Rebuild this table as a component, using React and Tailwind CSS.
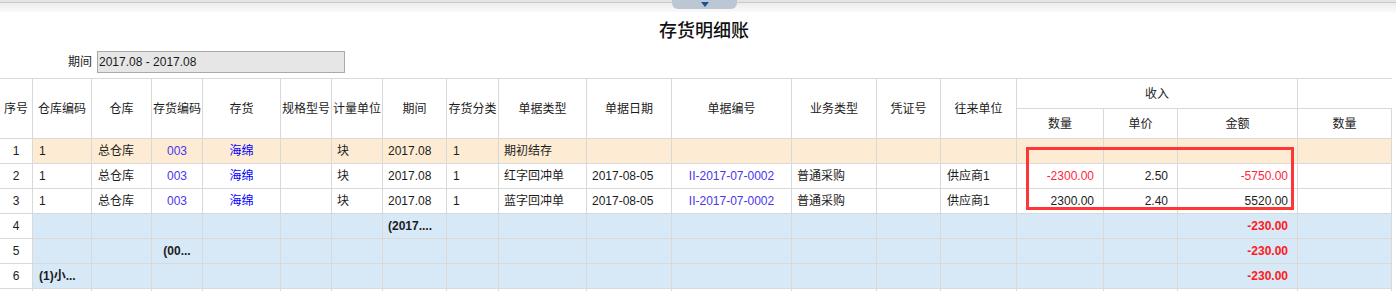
import React from 'react';

const cols =
  'grid grid-cols-[33px_59px_60px_51px_78px_51px_51px_64px_52px_88px_85px_120px_85px_64px_76px_87px_74px_120px_94px]';

const align = [
  'justify-center',
  'justify-start pl-[6px]',
  'justify-start pl-[6px]',
  'justify-center',
  'justify-center',
  'justify-start pl-[5px]',
  'justify-start pl-[5px]',
  'justify-start pl-[5px]',
  'justify-start pl-[6px]',
  'justify-start pl-[5px]',
  'justify-start pl-[5px]',
  'justify-center',
  'justify-start pl-[5px]',
  'justify-start pl-[5px]',
  'justify-start pl-[6px]',
  'justify-end pr-[9px]',
  'justify-end pr-[9px]',
  'justify-end pr-[9px]',
  'justify-end pr-[9px]',
];

const heads = [
  '序号', '仓库编码', '仓库', '存货编码', '存货', '规格型号', '计量单位', '期间', '存货分类',
  '单据类型', '单据日期', '单据编号', '业务类型', '凭证号', '往来单位',
];

// each cell: [text, colorClass]
const blue = 'text-[#0000ff]';
const purple = 'text-[#4b35ee]';
const red = 'text-[#ff1f3d]';
const sumRed = 'text-[#ff1a1a] font-bold';

const rows = [
  {
    bg: 'bg-[#fdecd3]',
    cells: [['1'], ['1'], ['总仓库'], ['003', purple], ['海绵', blue], [''], ['块'], ['2017.08'], ['1'],
      ['期初结存'], [''], [''], [''], [''], [''], [''], [''], [''], ['']],
  },
  {
    bg: 'bg-white',
    cells: [['2'], ['1'], ['总仓库'], ['003', purple], ['海绵', blue], [''], ['块'], ['2017.08'], ['1'],
      ['红字回冲单'], ['2017-08-05'], ['II-2017-07-0002', purple], ['普通采购'], [''], ['供应商1'],
      ['-2300.00', red], ['2.50'], ['-5750.00', red], ['']],
  },
  {
    bg: 'bg-white',
    cells: [['3'], ['1'], ['总仓库'], ['003', purple], ['海绵', blue], [''], ['块'], ['2017.08'], ['1'],
      ['蓝字回冲单'], ['2017-08-05'], ['II-2017-07-0002', purple], ['普通采购'], [''], ['供应商1'],
      ['2300.00'], ['2.40'], ['5520.00'], ['']],
  },
  {
    bg: 'bg-[#d7e8f7]',
    cells: [['4'], [''], [''], [''], [''], [''], [''], ['(2017....', 'font-bold'], [''],
      [''], [''], [''], [''], [''], [''], [''], [''], ['-230.00', sumRed], ['']],
  },
  {
    bg: 'bg-[#d7e8f7]',
    cells: [['5'], [''], [''], ['(00...', 'font-bold'], [''], [''], [''], [''], [''],
      [''], [''], [''], [''], [''], [''], [''], [''], ['-230.00', sumRed], ['']],
  },
  {
    bg: 'bg-[#d7e8f7]',
    cells: [['6'], ['(1)小...', 'font-bold'], [''], [''], [''], [''], [''], [''], [''],
      [''], [''], [''], [''], [''], [''], [''], [''], ['-230.00', sumRed], ['']],
  },
  { bg: 'bg-white', cells: Array.from({ length: 19 }, () => ['']) },
];

function Row({ row }) {
  return (
    <div className={`${cols} h-[25px]`}>
      {row.cells.map(([text, color], i) => (
        <div
          key={i}
          className={`flex items-center overflow-hidden whitespace-nowrap border-r border-b border-[#d9d9d9] ${align[i]} ${
            i === 0 ? 'bg-white' : row.bg
          } ${color || 'text-[#1c1c1c]'}`}
        >
          {text}
        </div>
      ))}
    </div>
  );
}

export default function App() {
  return (
    <div className="relative w-[1396px] h-[291px] overflow-hidden bg-white font-['Liberation_Sans','Noto_Sans_CJK_SC',sans-serif] text-[12px] text-[#1c1c1c]">
      {/* top strip */}
      <div className="h-[3px] border-b border-[#c9c9c9] bg-[#e4e4e4]" />
      <div className="h-[9px] bg-gradient-to-b from-[#ececec] to-[#fafafa]" />
      <div className="absolute left-[672px] top-0 w-[65px] h-[9px] rounded-b-[6px] bg-[#bcc7d6] flex justify-center items-center">
        <div className="w-0 h-0 border-l-[4px] border-r-[4px] border-t-[5px] border-l-transparent border-r-transparent border-t-[#1f4f9a]" />
      </div>

      {/* title */}
      <div className="h-[39px] flex items-center justify-center pl-[12px]">
        <span className="font-['Liberation_Serif','Noto_Sans_CJK_SC',serif] text-[18px] font-medium text-[#111]">
          存货明细账
        </span>
      </div>

      {/* period filter */}
      <div className="h-[22px] flex items-center pl-[68px] gap-[5px]">
        <span>期间</span>
        <div className="w-[248px] h-[22px] border border-[#a9a9a9] bg-[#e6e6e6] flex items-center pl-[1px] text-[#1a1a1a]">
          2017.08 - 2017.08
        </div>
      </div>

      {/* table */}
      <div className="mt-[5px] w-[1392px]">
        <div className={`${cols} grid-rows-[30px_30px] border-t border-[#d9d9d9]`}>
          {heads.map((h, i) => (
            <div
              key={h}
              style={{ gridColumn: i + 1 }}
              className="row-span-2 flex items-center justify-center whitespace-nowrap border-r border-b border-[#d9d9d9]"
            >
              {h}
            </div>
          ))}
          <div className="col-start-16 col-span-3 row-start-1 flex items-center justify-center border-r border-b border-[#d9d9d9]">
            收入
          </div>
          <div className="col-start-19 row-start-1 border-b border-[#d9d9d9]" />
          <div className="col-start-16 row-start-2 flex items-center justify-center border-r border-b border-[#d9d9d9]">数量</div>
          <div className="col-start-17 row-start-2 flex items-center justify-center border-r border-b border-[#d9d9d9]">单价</div>
          <div className="col-start-18 row-start-2 flex items-center justify-center border-r border-b border-[#d9d9d9]">金额</div>
          <div className="col-start-19 row-start-2 flex items-center justify-center border-r border-b border-[#d9d9d9]">数量</div>
        </div>
        {rows.map((row, i) => (
          <Row key={i} row={row} />
        ))}
      </div>

      {/* highlight box */}
      <div className="absolute left-[1026px] top-[147px] w-[268px] h-[63px] border-[3px] border-[#ff3636]" />
    </div>
  );
}
